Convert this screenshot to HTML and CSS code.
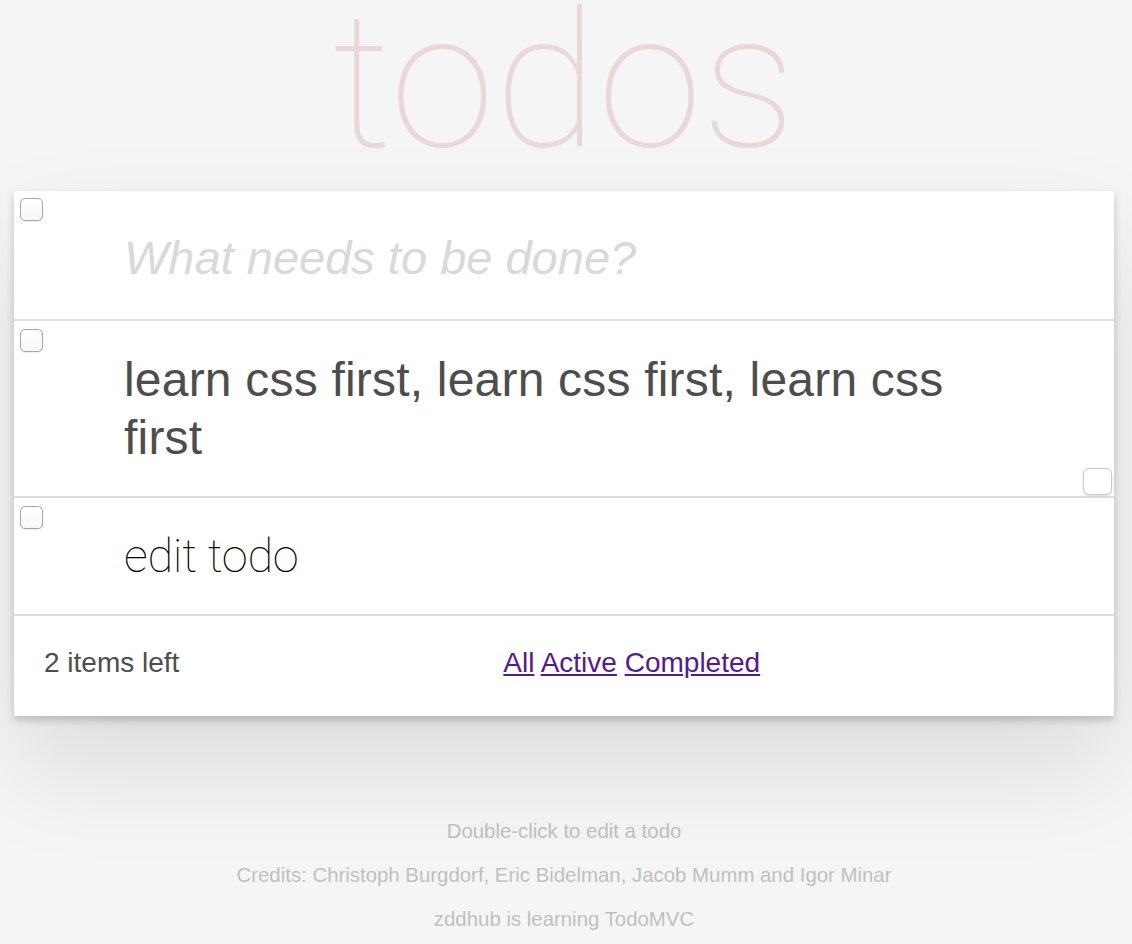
FILE: index.html
```html
<!DOCTYPE html>
<html lang="en">
<head>
<meta charset="utf-8">
<title>todos</title>
<link rel="stylesheet" href="styles.css">
</head>
<body>
<div class="page">
  <h1 class="title">todos</h1>
  <section class="todoapp">
    <header class="row header-row">
      <input type="checkbox" class="toggle">
      <span class="new-todo">What needs to be done?</span>
    </header>
    <ul class="todo-list">
      <li class="row item">
        <input type="checkbox" class="toggle">
        <label class="label">learn css first, learn css first, learn css first</label>
        <button class="destroy" type="button"></button>
      </li>
      <li class="row item editing">
        <input type="checkbox" class="toggle">
        <span class="label edit">edit todo</span>
      </li>
    </ul>
    <footer class="footer">
      <span class="count">2 items left</span>
      <div class="filters">
        <a href="#/" class="link">All</a> <a href="#/active" class="link">Active</a> <a href="#/completed" class="link">Completed</a>
      </div>
    </footer>
  </section>
  <div class="info">
    <p>Double-click to edit a todo</p>
    <p>Credits: Christoph Burgdorf, Eric Bidelman, Jacob Mumm and Igor Minar</p>
    <p>zddhub is learning TodoMVC</p>
  </div>
</div>
</body>
</html>
```

FILE: styles.css
```css
html, body {
  margin: 0;
  padding: 0;
}
body {
  background: #f5f5f5;
  font-family: "Helvetica Neue", Helvetica, "Liberation Sans", Arial, sans-serif;
  color: #4d4d4d;
  padding-right: 4px;
}
.page {
  width: 1100px;
  margin: 0 auto;
}
.title {
  margin: 0;
  height: 191px;
  font-family: Roboto, "Liberation Sans", sans-serif;
  font-weight: 100;
  font-size: 189px;
  line-height: 163px;
  text-align: center;
  color: rgba(175, 47, 47, 0.15);
}
.todoapp {
  background: #fff;
  position: relative;
  box-shadow: 0 4px 8px 0 rgba(0, 0, 0, 0.2), 0 50px 100px 0 rgba(0, 0, 0, 0.1);
}
.todo-list {
  list-style: none;
  margin: 0;
  padding: 0;
}
.row {
  position: relative;
  display: block;
  border-bottom: 2px solid #dedede;
}
.toggle {
  -webkit-appearance: none;
  appearance: none;
  position: absolute;
  left: 6px;
  top: 7px;
  width: 23px;
  height: 23px;
  margin: 0;
  border: 1px solid #a6a6a6;
  border-radius: 5px;
  background: linear-gradient(#fff, #f7f7f7);
  box-shadow: 0 1px 1px rgba(0, 0, 0, 0.08);
}
.item .toggle {
  top: 8px;
}
.header-row {
  height: 130px;
  box-sizing: border-box;
  padding: 37px 30px 0 110px;
}
.new-todo {
  display: block;
  font-size: 47px;
  line-height: 60px;
  font-style: italic;
  color: #d9d9d9;
}
.label {
  display: block;
  font-size: 48px;
  line-height: 57.6px;
  letter-spacing: 0.2px;
  padding: 30px 100px 30px 110px;
  color: #4d4d4d;
  word-break: break-word;
}
.editing .label {
  padding-top: 29px;
  padding-bottom: 29px;
}
.edit {
  font-family: Roboto, "Liberation Sans", sans-serif;
  font-weight: 100;
  font-size: 47px;
  letter-spacing: -0.3px;
  color: #000;
}
.destroy {
  -webkit-appearance: none;
  appearance: none;
  position: absolute;
  right: 2px;
  bottom: 1px;
  width: 29px;
  height: 27px;
  margin: 0;
  padding: 0;
  border: 1px solid #c9c9c9;
  border-radius: 6px;
  background: #fff;
  box-shadow: 0 1px 2px rgba(0, 0, 0, 0.15);
}
.footer {
  display: flex;
  align-items: flex-start;
  height: 100px;
  box-sizing: border-box;
  padding: 27px 30px 0 30px;
  font-size: 28px;
  line-height: 39.2px;
  color: #4d4d4d;
}
.count {
  flex: none;
}
.filters {
  flex: 1;
  text-align: center;
}
.link {
  color: #551a8b;
  text-decoration: underline;
}
.info {
  margin-top: 93px;
  text-align: center;
  color: #bfbfbf;
  font-size: 20.4px;
  text-shadow: 0 1px 0 rgba(255, 255, 255, 0.5);
}
.info p {
  margin: 0;
  line-height: 44px;
}
```
